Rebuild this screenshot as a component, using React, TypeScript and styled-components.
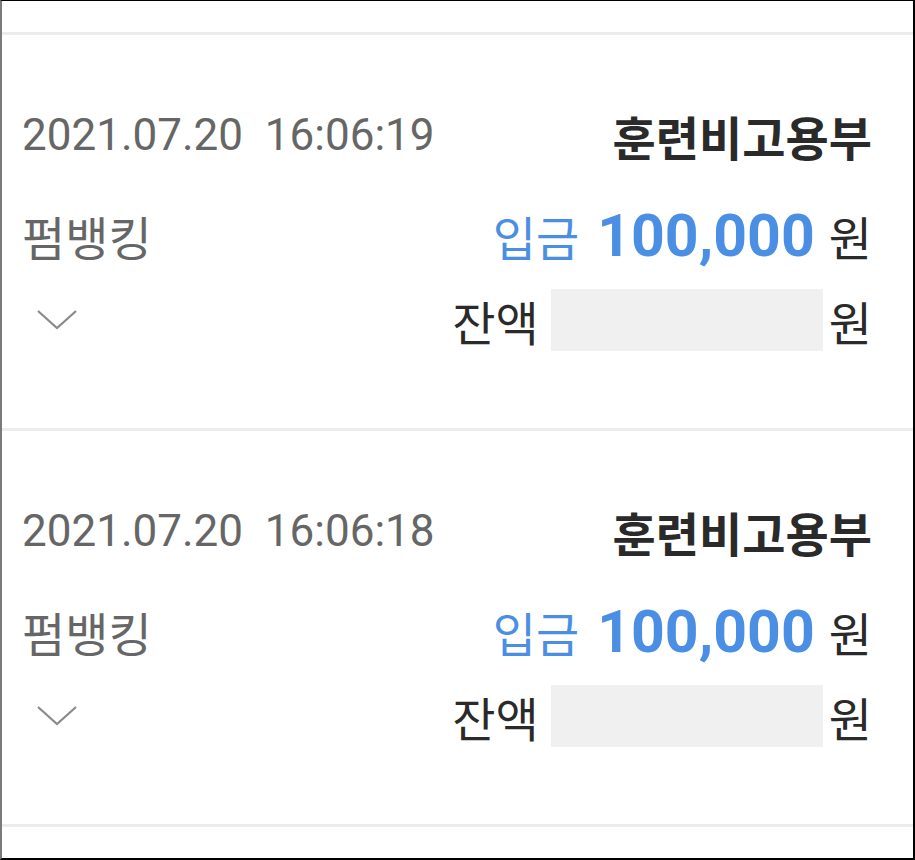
import React from 'react'
import styled, { createGlobalStyle } from 'styled-components'

const GlobalStyle = createGlobalStyle`
    html, body {
        margin: 0;
        padding: 0;
        background: #ffffff;
    }
    body {
        font-family: Roboto, 'Noto Sans CJK KR', sans-serif;
    }
`
const Frame = styled.div`
    box-sizing: border-box;
    width: 915px;
    height: 860px;
    overflow: hidden;
    border-top: 1px solid #000;
    border-left: 2px solid #7a7a7a;
    border-right: 2px solid #000;
    border-bottom: 2px solid #000;
    background: #fff;
    padding-top: 31px;
`
const Item = styled.div`
    border-top: 3px solid #ececec;
    padding: 69px 41px 0 20px;
    height: 396px;
    box-sizing: border-box;
`
const Row = styled.div<{ $mt?: number }>`
    display: flex;
    justify-content: space-between;
    align-items: center;
    margin-top: ${p => p.$mt || 0}px;
    height: 62px;
`
const DateText = styled.span`
    font-size: 44px;
    color: #666;
    white-space: pre;
`
const Bank = styled.span`
    font-family: 'Noto Sans CJK KR', sans-serif;
    font-size: 47px;
    font-weight: 700;
    color: #2a2a2a;
`
const Method = styled.span`
    font-family: 'Noto Sans CJK KR', sans-serif;
    font-size: 47px;
    color: #666;
`
const Right = styled.div`
    display: flex;
    align-items: center;
`
const Kind = styled.span`
    font-family: 'Noto Sans CJK KR', sans-serif;
    font-size: 47px;
    color: #4a8fe3;
    margin-right: 18px;
`
const Amount = styled.span`
    font-size: 59px;
    font-weight: 700;
    color: #4a8fe3;
    margin-right: 14px;
`
const Unit = styled.span`
    font-family: 'Noto Sans CJK KR', sans-serif;
    font-size: 47px;
    color: #2a2a2a;
`
const Label = styled(Unit)`
    margin-right: 12px;
`
const Masked = styled.div`
    width: 272px;
    height: 62px;
    background: #f0f0f0;
    margin-right: 6px;
`
const Chevron = styled.svg`
    width: 42px;
    height: 22px;
    margin-left: 14px;
`

const entries = [
    { time: '2021.07.20  16:06:19', bank: '훈련비고용부', method: '펌뱅킹', kind: '입금', amount: '100,000' },
    { time: '2021.07.20  16:06:18', bank: '훈련비고용부', method: '펌뱅킹', kind: '입금', amount: '100,000' },
]

const App = () => {
    return (
        <Frame>
            <GlobalStyle />
            {entries.map((e, i) => (
                <Item key={i}>
                    <Row>
                        <DateText>{e.time}</DateText>
                        <Bank>{e.bank}</Bank>
                    </Row>
                    <Row $mt={38}>
                        <Method>{e.method}</Method>
                        <Right>
                            <Kind>{e.kind}</Kind>
                            <Amount>{e.amount}</Amount>
                            <Unit>원</Unit>
                        </Right>
                    </Row>
                    <Row $mt={23}>
                        <Chevron viewBox="0 0 42 22">
                            <polyline points="2,2 21,19 40,2" fill="none" stroke="#8a8a8a" strokeWidth="2.2" />
                        </Chevron>
                        <Right>
                            <Label>잔액</Label>
                            <Masked />
                            <Unit>원</Unit>
                        </Right>
                    </Row>
                </Item>
            ))}
            <Item />
        </Frame>
    )
}

export default App
